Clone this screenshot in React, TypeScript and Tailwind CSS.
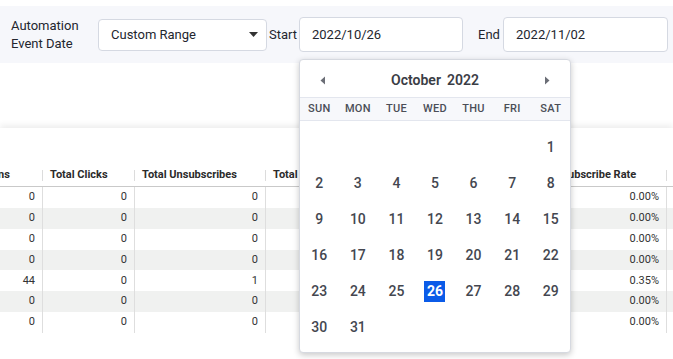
import React from "react";

const rows = [
  { opens: "0", clicks: "0", unsubs: "0", bounces: "0", rate: "0.00%", unsubRate: "0.00%" },
  { opens: "0", clicks: "0", unsubs: "0", bounces: "0", rate: "0.00%", unsubRate: "0.00%" },
  { opens: "0", clicks: "0", unsubs: "0", bounces: "0", rate: "0.00%", unsubRate: "0.00%" },
  { opens: "0", clicks: "0", unsubs: "0", bounces: "0", rate: "0.00%", unsubRate: "0.00%" },
  { opens: "44", clicks: "0", unsubs: "1", bounces: "0", rate: "15.49%", unsubRate: "0.35%" },
  { opens: "0", clicks: "0", unsubs: "0", bounces: "0", rate: "0.00%", unsubRate: "0.00%" },
  { opens: "0", clicks: "0", unsubs: "0", bounces: "0", rate: "0.00%", unsubRate: "0.00%" },
];

const columns = [
  { label: "Total Opens", key: "opens", width: "w-[99px]" },
  { label: "Total Clicks", key: "clicks", width: "w-[92px]" },
  { label: "Total Unsubscribes", key: "unsubs", width: "w-[131px]" },
  { label: "Total Bounces", key: "bounces", width: "w-[134px]" },
  { label: "Open Rate", key: "rate", width: "w-[142px]" },
  { label: "Unsubscribe Rate", key: "unsubRate", width: "w-[125px]" },
] as const;

const weekdays = ["SUN", "MON", "TUE", "WED", "THU", "FRI", "SAT"];

function DatePicker() {
  // October 2022 starts on a Saturday
  const cells: (number | null)[] = [null, null, null, null, null, null];
  for (let d = 1; d <= 31; d++) cells.push(d);
  while (cells.length < 42) cells.push(null);

  return (
    <div className="absolute left-0 top-[42px] z-10 w-[272px] rounded-[4px] border border-[#d6d9e0] bg-white shadow-[0_2px_6px_rgba(0,0,0,0.22)]">
      <div className="flex h-[37px] items-center justify-between px-[20px] pt-[4px]">
        <svg width="6" height="9" viewBox="0 0 6 9">
          <path d="M5 0.5 L0.5 4.5 L5 8.5 Z" fill="#6b6e76" />
        </svg>
        <div className="flex gap-[6px] text-[14px] font-semibold text-[#3a3d45]">
          <span>October</span>
          <span>2022</span>
        </div>
        <svg width="6" height="9" viewBox="0 0 6 9">
          <path d="M1 0.5 L5.5 4.5 L1 8.5 Z" fill="#6b6e76" />
        </svg>
      </div>
      <div className="grid h-[24px] grid-cols-7 items-center border-y border-[#e3e6ee] bg-[#f7f8fb]">
        {weekdays.map((w) => (
          <div key={w} className="pt-[1px] text-center text-[11px] font-medium tracking-[0.3px] text-[#4b4e57]">
            {w}
          </div>
        ))}
      </div>
      <div className="grid grid-cols-7 pt-[8px] pb-[7px]">
        {cells.map((d, i) => (
          <div key={i} className="flex h-[36px] items-center justify-center text-[14px] font-medium text-[#444750]">
            {d === 26 ? (
              <span className="flex h-[21px] w-[21px] items-center justify-center bg-[#0b5be8] font-bold text-white">
                26
              </span>
            ) : (
              d
            )}
          </div>
        ))}
      </div>
    </div>
  );
}

export default function App() {
  return (
    <div className="h-[359px] w-[673px] overflow-hidden bg-white font-['Roboto',sans-serif] text-[#23262e]">
      <div className="mt-[6px] flex h-[57px] items-center bg-[#f6f7fb]">
        <div className="w-[98px] pl-[11px] text-[13px] leading-[18px]">
          Automation
          <br />
          Event Date
        </div>
        <div className="flex h-[32px] w-[169px] items-center justify-between rounded-[4px] border border-[#d5d9e2] bg-white pl-[12px] pr-[8px] text-[13px]">
          <span>Custom Range</span>
          <svg width="9" height="5" viewBox="0 0 9 5">
            <path d="M0 0 L9 0 L4.5 5 Z" fill="#333" />
          </svg>
        </div>
        <span className="ml-[2px] w-[30px] text-[13px]">Start</span>
        <div className="relative">
          <div className="flex h-[35px] w-[164px] items-center rounded-[4px] border border-[#d5d9e2] bg-white pl-[12px] text-[13px]">
            2022/10/26
          </div>
          <DatePicker />
        </div>
        <span className="ml-[15px] w-[25px] text-[13px]">End</span>
        <div className="flex h-[35px] w-[165px] items-center rounded-[4px] border border-[#d5d9e2] bg-white pl-[12px] text-[13px]">
          2022/11/02
        </div>
      </div>

      <div className="mt-[65px] h-[300px] bg-white pt-[37px] shadow-[0_-3px_6px_rgba(0,0,0,0.07)]">
        <div className="overflow-hidden">
          <div className="ml-[-56px] w-max text-[11px] text-[#333]">
            <div className="flex h-[22px] border-b border-[#c9c9c9]">
              {columns.map((c) => (
                <div key={c.key} className={`${c.width} flex items-center justify-between pl-[7px] font-bold text-[#2b2b2b]`}>
                  <span className="whitespace-nowrap">{c.label}</span>
                  <span className="h-[11px] w-px bg-[#dcdcdc]" />
                </div>
              ))}
              <div className="flex w-[150px] items-center pl-[7px] font-bold">Status</div>
            </div>
            {rows.map((r, i) => (
              <div key={i} className={`flex h-[20.85px] ${i % 2 === 1 ? "bg-[#f0f1f0]" : "bg-white"}`}>
                {columns.map((c) => (
                  <div key={c.key} className={`${c.width} flex items-center justify-end border-r border-[#dedede] pr-[7px]`}>
                    {r[c.key]}
                  </div>
                ))}
                <div className="w-[150px]" />
              </div>
            ))}
          </div>
        </div>
      </div>
    </div>
  );
}
